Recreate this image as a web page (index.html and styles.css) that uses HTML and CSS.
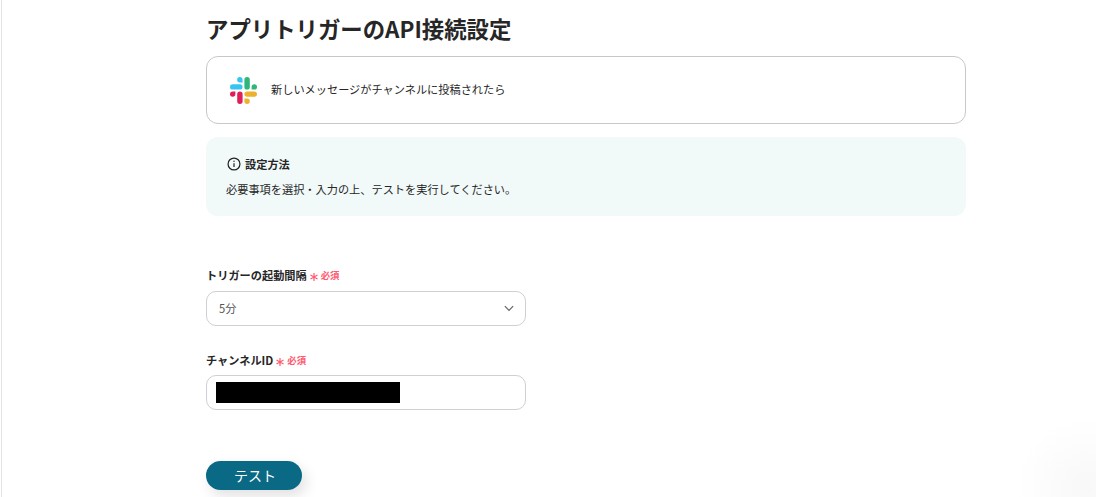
FILE: index.html
```html
<!DOCTYPE html>
<html lang="ja">
<head>
    <meta charset="UTF-8">
    <title>アプリトリガーのAPI接続設定</title>
    <link rel="stylesheet" href="styles.css">
</head>
<body>
    <div class="page">
        <div class="glow"></div>
        <main class="content">
            <h1 class="title">アプリトリガーのAPI接続設定</h1>

            <div class="trigger-card">
                <svg class="slack-logo" viewBox="0 0 54 54" width="27" height="27">
                    <path fill="#36c5f0" d="M19.7 0a5.4 5.4 0 0 0 0 10.8h5.4V5.4A5.4 5.4 0 0 0 19.7 0zm0 14.4H5.4a5.4 5.4 0 0 0 0 10.8h14.3a5.4 5.4 0 0 0 0-10.8z"/>
                    <path fill="#2eb67d" d="M54 19.8a5.4 5.4 0 0 0-10.8 0v5.4h5.4a5.4 5.4 0 0 0 5.4-5.4zm-14.4 0V5.4a5.4 5.4 0 0 0-10.8 0v14.4a5.4 5.4 0 0 0 10.8 0z"/>
                    <path fill="#ecb22e" d="M34.2 54a5.4 5.4 0 0 0 0-10.8h-5.4v5.4a5.4 5.4 0 0 0 5.4 5.4zm0-14.4h14.4a5.4 5.4 0 0 0 0-10.8H34.2a5.4 5.4 0 0 0 0 10.8z"/>
                    <path fill="#e01e5a" d="M0 34.2a5.4 5.4 0 0 0 10.8 0v-5.4H5.4A5.4 5.4 0 0 0 0 34.2zm14.4 0v14.4a5.4 5.4 0 0 0 10.8 0V34.2a5.4 5.4 0 0 0-10.8 0z"/>
                </svg>
                <span class="trigger-text">新しいメッセージがチャンネルに投稿されたら</span>
            </div>

            <div class="info-box">
                <div class="info-head">
                    <svg viewBox="0 0 16 16" width="14" height="14" fill="none" stroke="#222" stroke-width="1.4">
                        <circle cx="8" cy="8" r="6.8"/>
                        <path d="M8 7.2v4.2"/>
                        <circle cx="8" cy="4.8" r=".5" fill="#222" stroke-width=".6"/>
                    </svg>
                    <span>設定方法</span>
                </div>
                <p class="info-text">必要事項を選択・入力の上、テストを実行してください。</p>
            </div>

            <div class="field field-first">
                <div class="field-label">トリガーの起動間隔
                    <svg class="star" viewBox="0 0 8 8" width="8" height="8" fill="none" stroke="#ff5a70" stroke-width="1.2">
                        <path d="M4 0v8M.5 2l7 4M.5 6l7-4"/>
                    </svg>
                    <span class="required">必須</span>
                </div>
                <div class="control">
                    <span class="select-value">5分</span>
                    <svg viewBox="0 0 12 8" width="10" height="7" fill="none" stroke="#666" stroke-width="1.5">
                        <path d="M1 1.2l5 5 5-5"/>
                    </svg>
                </div>
            </div>

            <div class="field">
                <div class="field-label">チャンネルID
                    <svg class="star" viewBox="0 0 8 8" width="8" height="8" fill="none" stroke="#ff5a70" stroke-width="1.2">
                        <path d="M4 0v8M.5 2l7 4M.5 6l7-4"/>
                    </svg>
                    <span class="required">必須</span>
                </div>
                <div class="control control-input">
                    <div class="masked"></div>
                </div>
            </div>

            <button class="test-btn" type="button">テスト</button>
        </main>
    </div>
</body>
</html>
```

FILE: styles.css
```css
* {
    box-sizing: border-box;
}
html, body {
    height: 100%;
}
body {
    margin: 0;
    background-color: #fff;
    color: #262626;
    font-family: "Noto Sans CJK JP", "Noto Sans", sans-serif;
    overflow: hidden;
}
.page {
    position: relative;
    height: 497px;
    margin-left: 1px;
    padding-left: 204px;
    border-left: 1px solid #e4e4e4;
    overflow: hidden;
}
.glow {
    position: absolute;
    right: -60px;
    bottom: -60px;
    width: 140px;
    height: 140px;
    border-radius: 50%;
    background: radial-gradient(circle, #f8f8f8 0%, #fff 70%);
}
.content {
    position: relative;
    width: 760px;
    padding-top: 12px;
}
.title {
    margin: 0 0 12px;
    font-size: 22.4px;
    line-height: 32px;
    font-weight: 700;
}
.trigger-card {
    display: flex;
    align-items: center;
    gap: 14px;
    height: 68px;
    padding-left: 23px;
    border: 1px solid #c8c8c8;
    border-radius: 12px;
    font-size: 11.2px;
}
.trigger-text {
    margin-bottom: 2px;
}
.info-box {
    height: 79px;
    margin-top: 13px;
    padding: 18px 20px;
    border-radius: 12px;
    background-color: #f1f9f9;
    font-size: 11.2px;
}
.info-head {
    display: flex;
    align-items: center;
    gap: 4px;
    height: 18px;
    padding-left: 1px;
    font-weight: 700;
}
.info-text {
    margin: 7px 0 0;
    line-height: 18px;
}
.field {
    width: 320px;
    margin-top: 24px;
}
.field-first {
    margin-top: 49px;
}
.field-label {
    display: flex;
    align-items: center;
    height: 20px;
    margin-bottom: 5px;
    font-size: 11.2px;
    font-weight: 700;
}
.field-first .field-label {
    margin-bottom: 6px;
}
.star {
    margin: 3px 0 0 3px;
}
.required {
    margin-left: 3px;
    color: #ff5a70;
    font-size: 9.4px;
}
.control {
    display: flex;
    align-items: center;
    justify-content: space-between;
    height: 35px;
    padding: 0 11px 0 12px;
    border: 1px solid #cdd0d4;
    border-radius: 10px;
    background-color: #fff;
}
.select-value {
    margin-bottom: 2px;
    font-size: 11.2px;
    color: #555;
}
.control-input {
    padding-left: 9px;
}
.masked {
    width: 184px;
    height: 21px;
    background-color: #000;
}
.test-btn {
    display: block;
    width: 96px;
    height: 29px;
    margin-top: 51px;
    padding: 0 0 1px 2px;
    border: none;
    border-radius: 15px;
    background-color: #0a6a85;
    color: #fff;
    font-family: inherit;
    font-size: 14px;
    box-shadow: 4px 6px 14px rgba(0,0,0,0.12);
    cursor: pointer;
}
```
